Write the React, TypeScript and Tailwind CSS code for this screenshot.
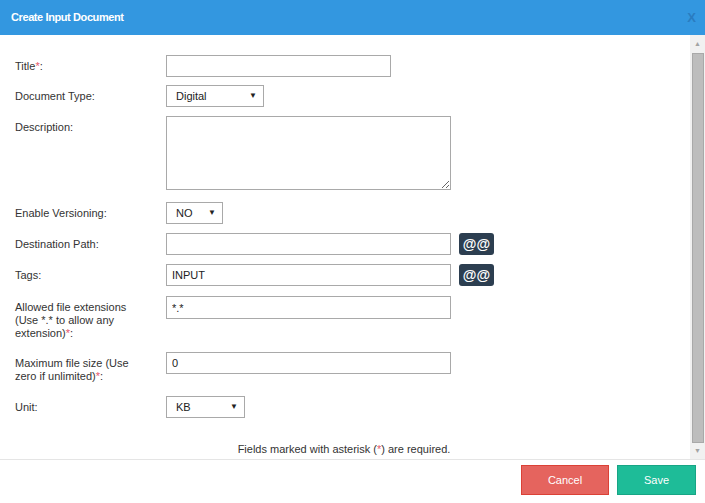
import React from "react";

const Req = () => <span className="text-[#e5566a]">*</span>;

const Field = ({ w, value = "", h = "h-[22px]" }: { w: string; value?: string; h?: string }) => (
  <input
    readOnly
    value={value}
    className={`${w} ${h} border border-[#a9a9a9] bg-white px-[5px] text-[11px] text-[#222] outline-none`}
  />
);

const Select = ({ w, value }: { w: string; value: string }) => (
  <div
    className={`${w} h-[22px] border border-[#a9a9a9] bg-white flex items-center justify-between pl-[9px] pr-[6px] text-[11px] text-[#222]`}
  >
    <span>{value}</span>
    <span className="text-[8px] leading-none">▼</span>
  </div>
);

const AtBtn = () => (
  <button className="ml-[8px] w-[35px] h-[22px] rounded-[3px] bg-[#2c3e50] text-white text-[14px] font-bold leading-none flex items-center justify-center">
    @@
  </button>
);

const Row = ({
  label,
  children,
  mb,
}: {
  label: React.ReactNode;
  children: React.ReactNode;
  mb: string;
}) => (
  <div className={`flex items-start ${mb}`}>
    <div className="w-[151px] pt-[5px] pr-[24px] text-[11px] leading-[13px] text-[#333]">{label}</div>
    <div className="flex items-center">{children}</div>
  </div>
);

export default function App() {
  return (
    <div
      className="w-[705px] h-[503px] bg-white flex flex-col overflow-hidden"
      style={{ fontFamily: '"Liberation Sans", Arial, sans-serif' }}
    >
      <div className="h-[35px] shrink-0 bg-[#3397e0] flex items-center justify-between pl-[11px] pr-[9px]">
        <span className="text-white text-[11px] font-bold tracking-[-0.4px]">Create Input Document</span>
        <span className="text-[#2a7cc0] text-[13px] font-bold">X</span>
      </div>

      <div className="h-[425px] shrink-0 flex border-b border-[#e5e5e5]">
        <div className="flex-1 pt-[20px] pl-[15px]">
          <Row mb="mb-[8px]" label={<>Title<Req />:</>}>
            <Field w="w-[225px]" />
          </Row>
          <Row mb="mb-[9px]" label="Document Type:">
            <Select w="w-[98px]" value="Digital" />
          </Row>
          <Row mb="mb-[12px]" label="Description:">
            <textarea readOnly className="w-[285px] h-[74px] border border-[#a9a9a9] outline-none block" />
          </Row>
          <Row mb="mb-[9px]" label="Enable Versioning:">
            <Select w="w-[57px]" value="NO" />
          </Row>
          <Row mb="mb-[9px]" label="Destination Path:">
            <Field w="w-[285px]" />
            <AtBtn />
          </Row>
          <Row mb="mb-[10px]" label="Tags:">
            <Field w="w-[285px]" value="INPUT" />
            <AtBtn />
          </Row>
          <Row
            mb="mb-[12px]"
            label={
              <>
                Allowed file extensions (Use *.* to allow any extension)<Req />:
              </>
            }
          >
            <Field w="w-[285px]" h="h-[23px]" value="*.*" />
          </Row>
          <Row
            mb="mb-[13px]"
            label={
              <>
                Maximum file size (Use zero if unlimited)<Req />:
              </>
            }
          >
            <Field w="w-[285px]" value="0" />
          </Row>
          <Row mb="mb-[23px]" label="Unit:">
            <Select w="w-[79px]" value="KB" />
          </Row>
          <p className="text-center pr-[17px] text-[11px] text-[#333]">
            Fields marked with asterisk (<Req />) are required.
          </p>
        </div>

        <div className="w-[15px] bg-[#f1f1f1] flex flex-col items-center">
          <div className="h-[18px] flex items-center justify-center text-[#a3a3a3] text-[7px]">▲</div>
          <div className="w-[12px] h-[390px] bg-[#bdbdbd] border border-[#a9a9a9]" />
          <div className="flex-1 flex items-center justify-center text-[#a3a3a3] text-[7px]">▼</div>
        </div>
      </div>

      <div className="flex-1 flex items-center justify-end gap-[8px] pr-[9px] pb-[3px]">
        <button className="w-[88px] h-[30px] bg-[#e5645e] border border-[#db4136] text-white text-[11px]">
          Cancel
        </button>
        <button className="w-[79px] h-[30px] bg-[#1ebc98] border border-[#17a585] text-white text-[11px]">
          Save
        </button>
      </div>
    </div>
  );
}
